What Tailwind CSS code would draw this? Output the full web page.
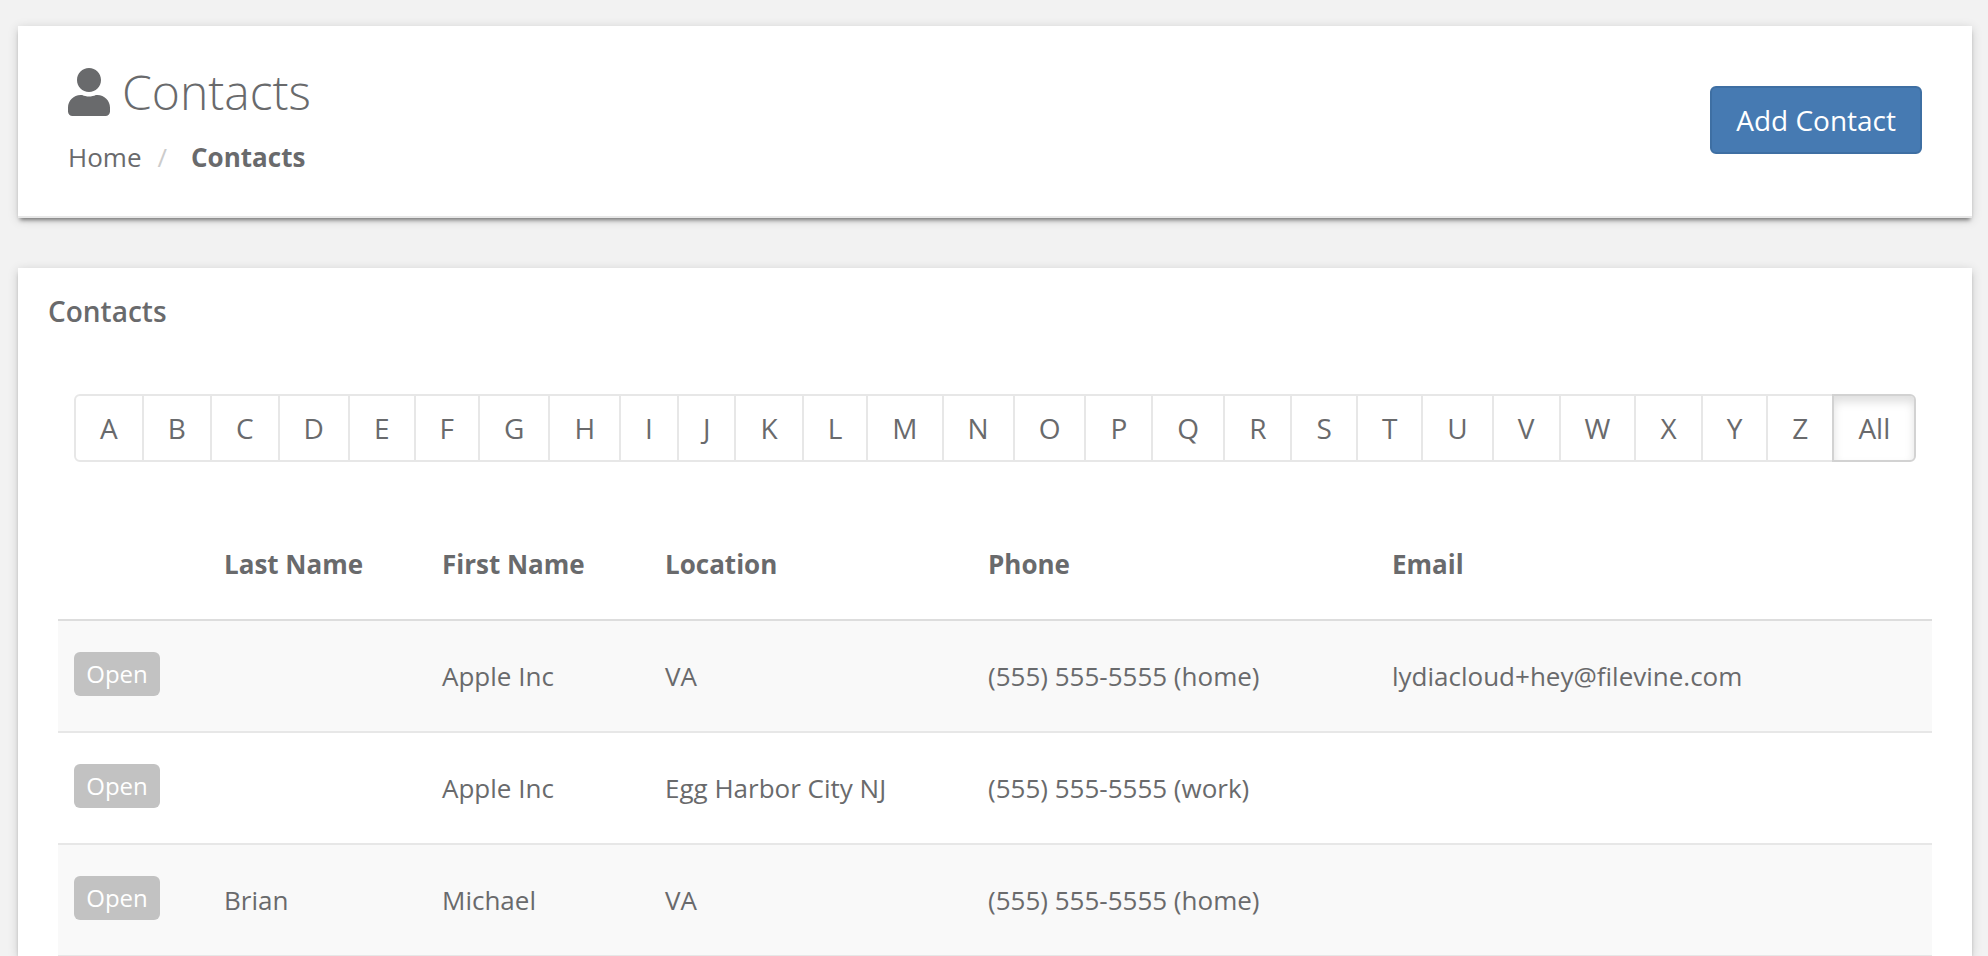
<!DOCTYPE html>
<html lang="en">
<head>
    <meta charset="UTF-8">
    <title>Contacts</title>
    <meta name="viewport" content="width=device-width, initial-scale=1.0">
    <script src="https://cdn.jsdelivr.net/npm/@tailwindcss/browser@4"></script>
</head>
<body class="h-screen overflow-hidden bg-[#f2f2f2] pl-[18px] pr-4 pt-[26px] font-['Open_Sans',sans-serif] text-[26px] leading-[38px] text-[#696a6c]">

    <!-- Page heading -->
    <header class="flex h-48 items-start justify-between border-b-2 border-[#e7e7e7] bg-white px-[50px] shadow-[0_4px_4px_-2px_rgba(0,0,0,0.45),0_2px_10px_rgba(0,0,0,0.16)]">
        <div>
            <h1 class="mt-9 flex h-[60px] items-center text-5xl font-light">
                <svg class="mr-3 h-12 w-[42px]" viewBox="0 0 448 512" fill="currentColor">
                    <path d="M224 256c70.7 0 128-57.3 128-128S294.7 0 224 0 96 57.3 96 128s57.3 128 128 128zm89.6 32h-16.7c-22.2 10.2-46.9 16-72.9 16s-50.6-5.8-72.9-16h-16.7C60.2 288 0 348.2 0 422.4V464c0 26.5 21.5 48 48 48h352c26.5 0 48-21.5 48-48v-41.6c0-74.2-60.2-134.4-134.4-134.4z"/>
                </svg>
                Contacts
            </h1>
            <nav class="mt-4 flex">
                <a href="#">Home</a>
                <span class="ml-4 mr-6 text-[#ccc]">/</span>
                <strong class="font-bold">Contacts</strong>
            </nav>
        </div>
        <button class="mt-[60px] h-[68px] rounded-md border-2 border-[#3e6fa3] bg-[#467ab2] px-6 text-[28px] leading-10 text-white">Add Contact</button>
    </header>

    <!-- Contact list -->
    <main class="mt-[50px] h-[688px] bg-white shadow-[0_4px_4px_-2px_rgba(0,0,0,0.45),0_2px_10px_rgba(0,0,0,0.16)]">
        <h2 class="pl-[30px] pt-[23px] text-[28px] font-semibold leading-10">Contacts</h2>

        <!-- Letter filter -->
        <div class="ml-14 mt-[63px] flex h-[68px] text-[28px] leading-[64px] tracking-[0.03px]">
            <a href="#" class="rounded-l-md border-2 border-[#e7e7e7] px-6">A</a>
            <a href="#" class="-ml-0.5 border-2 border-[#e7e7e7] px-6">B</a>
            <a href="#" class="-ml-0.5 border-2 border-[#e7e7e7] px-6">C</a>
            <a href="#" class="-ml-0.5 border-2 border-[#e7e7e7] px-6">D</a>
            <a href="#" class="-ml-0.5 border-2 border-[#e7e7e7] px-6">E</a>
            <a href="#" class="-ml-0.5 border-2 border-[#e7e7e7] px-6">F</a>
            <a href="#" class="-ml-0.5 border-2 border-[#e7e7e7] px-6">G</a>
            <a href="#" class="-ml-0.5 border-2 border-[#e7e7e7] px-6">H</a>
            <a href="#" class="-ml-0.5 border-2 border-[#e7e7e7] px-6">I</a>
            <a href="#" class="-ml-0.5 border-2 border-[#e7e7e7] px-6">J</a>
            <a href="#" class="-ml-0.5 border-2 border-[#e7e7e7] px-6">K</a>
            <a href="#" class="-ml-0.5 border-2 border-[#e7e7e7] px-6">L</a>
            <a href="#" class="-ml-0.5 border-2 border-[#e7e7e7] px-6">M</a>
            <a href="#" class="-ml-0.5 border-2 border-[#e7e7e7] px-6">N</a>
            <a href="#" class="-ml-0.5 border-2 border-[#e7e7e7] px-6">O</a>
            <a href="#" class="-ml-0.5 border-2 border-[#e7e7e7] px-6">P</a>
            <a href="#" class="-ml-0.5 border-2 border-[#e7e7e7] px-6">Q</a>
            <a href="#" class="-ml-0.5 border-2 border-[#e7e7e7] px-6">R</a>
            <a href="#" class="-ml-0.5 border-2 border-[#e7e7e7] px-6">S</a>
            <a href="#" class="-ml-0.5 border-2 border-[#e7e7e7] px-6">T</a>
            <a href="#" class="-ml-0.5 border-2 border-[#e7e7e7] px-6">U</a>
            <a href="#" class="-ml-0.5 border-2 border-[#e7e7e7] px-6">V</a>
            <a href="#" class="-ml-0.5 border-2 border-[#e7e7e7] px-6">W</a>
            <a href="#" class="-ml-0.5 border-2 border-[#e7e7e7] px-6">X</a>
            <a href="#" class="-ml-0.5 border-2 border-[#e7e7e7] px-6">Y</a>
            <a href="#" class="-ml-0.5 border-2 border-[#e7e7e7] px-6">Z</a>
            <a href="#" class="-ml-0.5 rounded-r-md border-2 border-[#d2d2d2] px-6 shadow-[inset_0_6px_10px_rgba(0,0,0,0.125)]">All</a>
        </div>

        <table class="ml-10 mt-[47px] w-[1874px] table-fixed border-separate border-spacing-0 text-left">
            <colgroup>
                <col class="w-[150px]">
                <col class="w-[218px]">
                <col class="w-[223px]">
                <col class="w-[323px]">
                <col class="w-[404px]">
                <col>
            </colgroup>
            <thead>
                <tr class="h-28 *:border-b-2 *:border-[#ddd] *:px-4 *:font-bold">
                    <th></th>
                    <th>Last Name</th>
                    <th>First Name</th>
                    <th>Location</th>
                    <th>Phone</th>
                    <th>Email</th>
                </tr>
            </thead>
            <tbody>
                <tr class="h-28 bg-[#f9f9f9] *:border-b-2 *:border-[#e7e7e7] *:px-4">
                    <td><a href="#" class="mb-1 block h-11 w-[86px] rounded-md bg-[#c2c2c2] text-center text-2xl leading-[44px] text-white">Open</a></td>
                    <td></td>
                    <td>Apple Inc</td>
                    <td>VA</td>
                    <td>(555) 555-5555 (home)</td>
                    <td>lydiacloud+hey@filevine.com</td>
                </tr>
                <tr class="h-28 *:border-b-2 *:border-[#e7e7e7] *:px-4">
                    <td><a href="#" class="mb-1 block h-11 w-[86px] rounded-md bg-[#c2c2c2] text-center text-2xl leading-[44px] text-white">Open</a></td>
                    <td></td>
                    <td>Apple Inc</td>
                    <td>Egg Harbor City NJ</td>
                    <td>(555) 555-5555 (work)</td>
                    <td></td>
                </tr>
                <tr class="h-28 bg-[#f9f9f9] *:border-b-2 *:border-[#e7e7e7] *:px-4">
                    <td><a href="#" class="mb-1 block h-11 w-[86px] rounded-md bg-[#c2c2c2] text-center text-2xl leading-[44px] text-white">Open</a></td>
                    <td>Brian</td>
                    <td>Michael</td>
                    <td>VA</td>
                    <td>(555) 555-5555 (home)</td>
                    <td></td>
                </tr>
            </tbody>
        </table>
    </main>
</body>
</html>
